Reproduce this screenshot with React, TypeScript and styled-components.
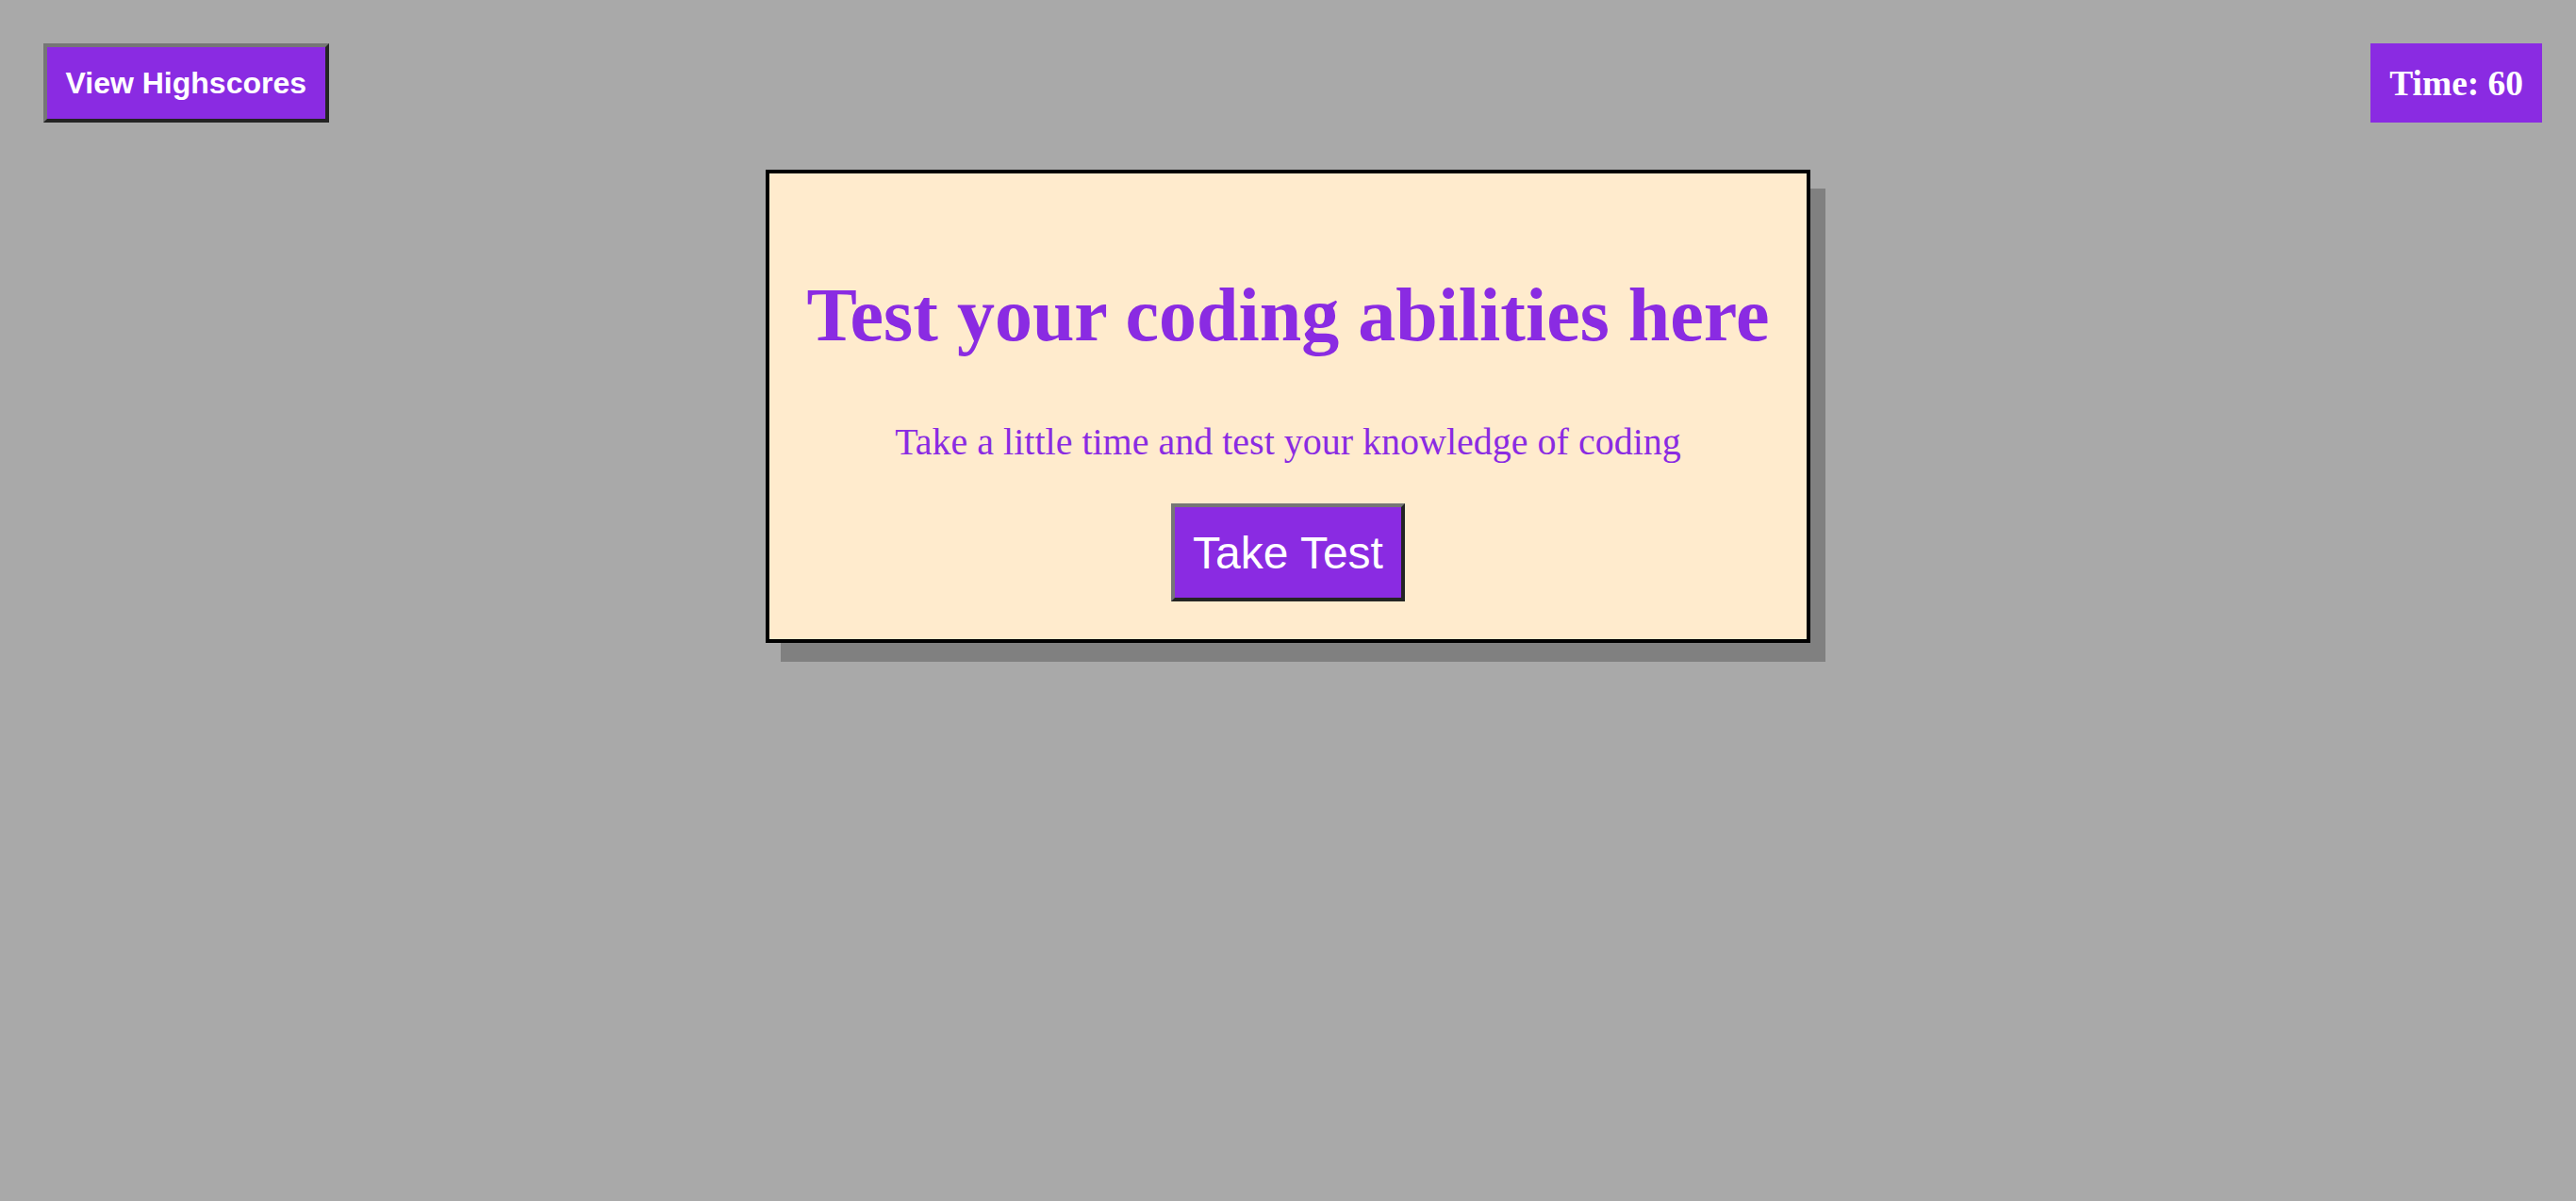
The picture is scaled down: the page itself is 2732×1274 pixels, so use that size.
import React from 'react';
import styled, { createGlobalStyle } from 'styled-components';

const GlobalStyle = createGlobalStyle`
  html, body {
    margin: 0;
    padding: 0;
    background-color: #a9a9a9;
    min-height: 100vh;
  }
`;

const Page = styled.div`
  min-height: 1274px;
  background-color: #a9a9a9;
  font-family: "Liberation Serif", "Times New Roman", serif;
`;

const Header = styled.header`
  display: flex;
  justify-content: space-between;
  align-items: flex-start;
  padding: 46px 36px 0 46px;
`;

const RaisedButton = styled.button<{ $size: number; $bold?: boolean }>`
  box-sizing: border-box;
  font-family: "Liberation Sans", Arial, sans-serif;
  font-size: ${(p) => p.$size}px;
  font-weight: ${(p) => (p.$bold ? 700 : 400)};
  line-height: normal;
  color: #ffffff;
  background-color: #8a2be2;
  border: 4px solid;
  border-color: #767676 #242424 #242424 #767676;
  margin: 0;
  cursor: pointer;
`;

const ScoresButton = styled(RaisedButton)`
  height: 84px;
  padding: 0 19.5px;
`;

const Timer = styled.div`
  font-family: "Liberation Serif", "Times New Roman", serif;
  font-size: 37.44px;
  font-weight: 700;
  line-height: normal;
  color: #ffffff;
  background-color: #8a2be2;
  padding: 20.5px 20px;
`;

const Card = styled.section`
  width: 1108px;
  height: 502px;
  box-sizing: border-box;
  margin: 50px auto 0;
  border: 4px solid #000000;
  background-color: #ffebcd;
  box-shadow: 16px 20px 0 #808080;
  display: flex;
  flex-direction: column;
  align-items: center;
  padding: 110px 20px 0;
  text-align: center;
  color: #8a2be2;
`;

const Title = styled.h1`
  margin: 0;
  font-size: 80px;
  line-height: 80px;
  font-weight: 700;
`;

const Lead = styled.p`
  margin: 75px 0 0;
  font-size: 40px;
  line-height: 40px;
`;

const StartButton = styled(RaisedButton)`
  margin-top: 45px;
  width: 248px;
  height: 104px;
  padding: 0;
`;

function App() {
  return (
    <Page>
      <GlobalStyle />
      <Header>
        <ScoresButton $size={32} $bold>View Highscores</ScoresButton>
        <Timer>Time: 60</Timer>
      </Header>
      <Card>
        <Title>Test your coding abilities here</Title>
        <Lead>Take a little time and test your knowledge of coding</Lead>
        <StartButton $size={48}>Take Test</StartButton>
      </Card>
    </Page>
  );
}

export default App;
